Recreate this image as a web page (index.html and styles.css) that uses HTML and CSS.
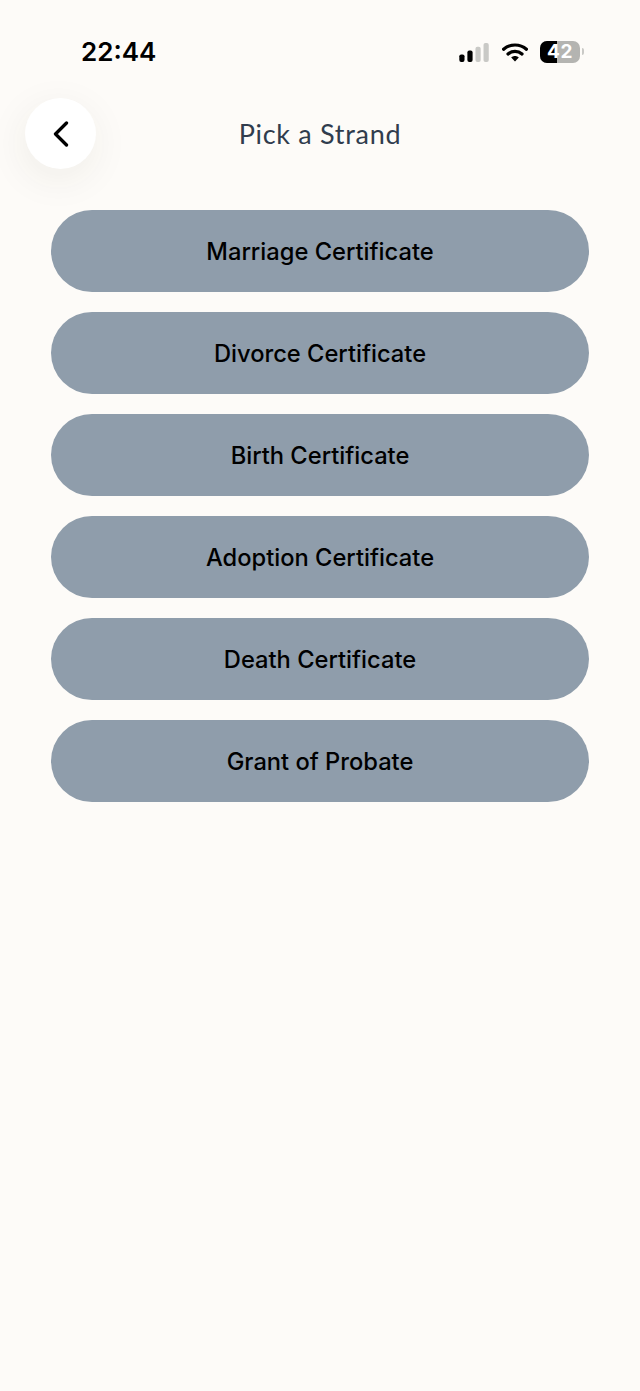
FILE: index.html
```html
<!DOCTYPE html>
<html lang="en">
<head>
<meta charset="utf-8">
<title>Pick a Strand</title>
<link rel="stylesheet" href="styles.css">
</head>
<body>
<div class="status">
  <span class="time">22:44</span>
  <div class="indicators">
    <svg class="signal" viewBox="0 0 32 20" aria-hidden="true">
      <rect x="0" y="12" width="5.5" height="8" rx="2" fill="#000"/>
      <rect x="8.5" y="8" width="5.5" height="12" rx="2" fill="#000"/>
      <rect x="17" y="4" width="5.5" height="16" rx="2" fill="#c9c9c6"/>
      <rect x="25.5" y="0" width="5.5" height="20" rx="2" fill="#c9c9c6"/>
    </svg>
    <svg class="wifi" viewBox="0 0 26 20" aria-hidden="true">
      <path d="M1.6 7.2C7.8 1.6 18.2 1.6 24.4 7.2" fill="none" stroke="#000" stroke-width="3.2" stroke-linecap="round"/>
      <path d="M6 12C10 8.4 16 8.4 20 12" fill="none" stroke="#000" stroke-width="3.2" stroke-linecap="round"/>
      <path d="M9.2 15.4C11.4 13.4 14.6 13.4 16.8 15.4L13 19.6Z" fill="#000"/>
    </svg>
    <div class="battery">
      <div class="battery-body">
        <div class="battery-fill"></div>
        <span class="battery-text">42</span>
      </div>
      <div class="battery-nub"></div>
    </div>
  </div>
</div>
<header class="header">
  <button class="back" aria-label="Back">
    <svg class="back-icon" viewBox="0 0 16 26" aria-hidden="true">
      <path d="M13.5 2L2.5 13L13.5 24" fill="none" stroke="#000" stroke-width="3.3" stroke-linecap="round" stroke-linejoin="round"/>
    </svg>
  </button>
  <h1 class="title">Pick a Strand</h1>
</header>
<main class="list">
  <button class="item">Marriage Certificate</button>
  <button class="item">Divorce Certificate</button>
  <button class="item">Birth Certificate</button>
  <button class="item">Adoption Certificate</button>
  <button class="item">Death Certificate</button>
  <button class="item">Grant of Probate</button>
</main>
</body>
</html>
```

FILE: styles.css
```css
* { box-sizing: border-box; }
html, body { margin: 0; padding: 0; }
body {
  width: 640px;
  height: 1391px;
  overflow: hidden;
  background: #fdfbf8;
  font-family: Inter, "Liberation Sans", sans-serif;
}
.status {
  display: flex;
  align-items: center;
  justify-content: space-between;
  height: 36px;
  margin: 33px 0 29px;
  padding: 0 56px 0 81px;
}
.time {
  font-size: 26px;
  font-weight: 600;
  color: #000;
}
.indicators {
  display: flex;
  align-items: center;
}
.signal { width: 31px; height: 19px; margin-top: 3px; }
.wifi { width: 26px; height: 20px; margin-left: 12px; margin-top: 1px; }
.battery {
  display: flex;
  align-items: center;
  margin-left: 12px;
  margin-top: 1px;
}
.battery-body {
  position: relative;
  display: flex;
  align-items: center;
  justify-content: center;
  width: 40px;
  height: 22px;
  border-radius: 7px;
  overflow: hidden;
  background: #b4b4b1;
}
.battery-fill {
  position: absolute;
  left: 0;
  top: 0;
  bottom: 0;
  width: 17px;
  background: #000;
}
.battery-text {
  position: relative;
  font-size: 19px;
  font-weight: 700;
  color: #fff;
  letter-spacing: 0.5px;
}
.battery-nub {
  width: 2px;
  height: 7px;
  margin-left: 2px;
  border-radius: 0 2px 2px 0;
  background: #c9c9c6;
}
.header {
  display: grid;
  grid-template-columns: 71px 1fr 71px;
  align-items: center;
  height: 70px;
  padding: 0 25px;
}
.back {
  display: flex;
  align-items: center;
  justify-content: center;
  width: 71px;
  height: 71px;
  padding: 0;
  border: 0;
  border-radius: 50%;
  background: #fff;
  box-shadow: -2px 10px 40px rgba(60, 50, 30, 0.07);
}
.back-icon { width: 16px; height: 26px; }
.title {
  margin: 0;
  text-align: center;
  font-family: Lato, sans-serif;
  font-size: 27px;
  font-weight: 400;
  letter-spacing: 0.7px;
  color: #303c4d;
}
.list {
  display: flex;
  flex-direction: column;
  gap: 20px;
  margin-top: 42px;
  padding: 0 51px;
}
.item {
  height: 82px;
  padding: 0;
  border: 0;
  border-radius: 41px;
  background: #8f9dab;
  font-family: Inter, "Liberation Sans", sans-serif;
  font-size: 23.7px;
  font-weight: 500;
  color: #000;
}
```
